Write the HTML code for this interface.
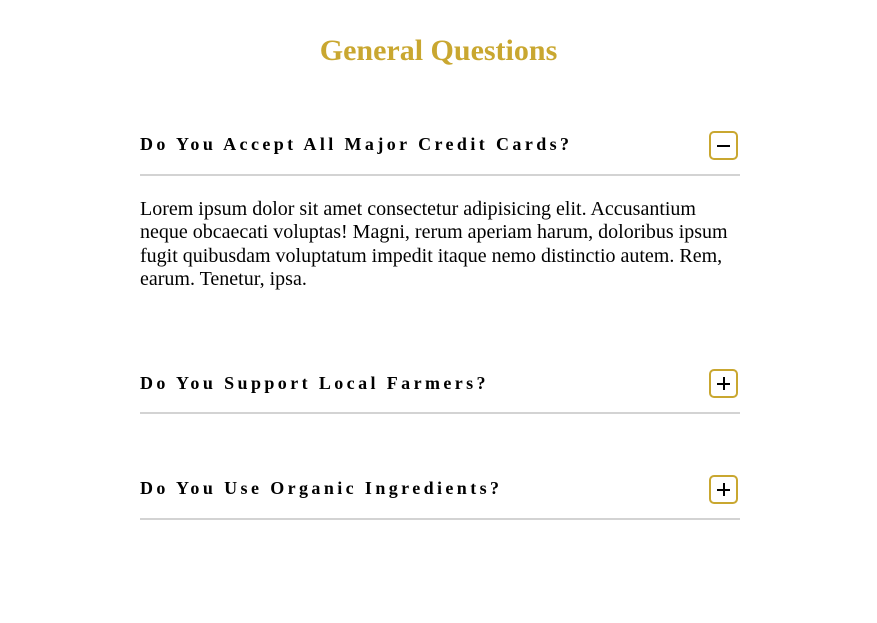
<!DOCTYPE html>
<html><head><style>
body{margin:0;width:877px;height:623px;background:#fff;font-family:"Liberation Serif",serif;position:relative;overflow:hidden}
h1{position:absolute;top:34px;left:0;width:877px;text-align:center;margin:0;font-size:30px;color:#c9a730;font-weight:bold;line-height:34px}
.q{position:absolute;left:140px;margin:0;font-size:18px;font-weight:bold;letter-spacing:3.4px;line-height:20px;color:#000}
.line{position:absolute;left:140px;width:600px;height:2px;background:#d3d3d3}
.btn{position:absolute;left:709px;width:25px;height:25px;border:2px solid #c9a730;border-radius:5px}
.btn:before{content:"";position:absolute;left:6px;top:11.5px;width:13px;height:2px;background:#000}
.plus:after{content:"";position:absolute;left:11.5px;top:6px;width:2px;height:13px;background:#000}
p{position:absolute;left:140px;top:198px;width:600px;margin:0;font-size:20px;line-height:23.3px;color:#000}
</style></head><body>
<h1>General Questions</h1>
<div class="q" style="top:134px">Do You Accept All Major Credit Cards?</div>
<div class="btn" style="top:131px"></div>
<div class="line" style="top:174px"></div>
<p>Lorem ipsum dolor sit amet consectetur adipisicing elit. Accusantium neque obcaecati voluptas! Magni, rerum aperiam harum, doloribus ipsum fugit quibusdam voluptatum impedit itaque nemo distinctio autem. Rem, earum. Tenetur, ipsa.</p>
<div class="q" style="top:373px">Do You Support Local Farmers?</div>
<div class="btn plus" style="top:369px"></div>
<div class="line" style="top:412px"></div>
<div class="q" style="top:478px">Do You Use Organic Ingredients?</div>
<div class="btn plus" style="top:475px"></div>
<div class="line" style="top:518px"></div>
</body></html>
